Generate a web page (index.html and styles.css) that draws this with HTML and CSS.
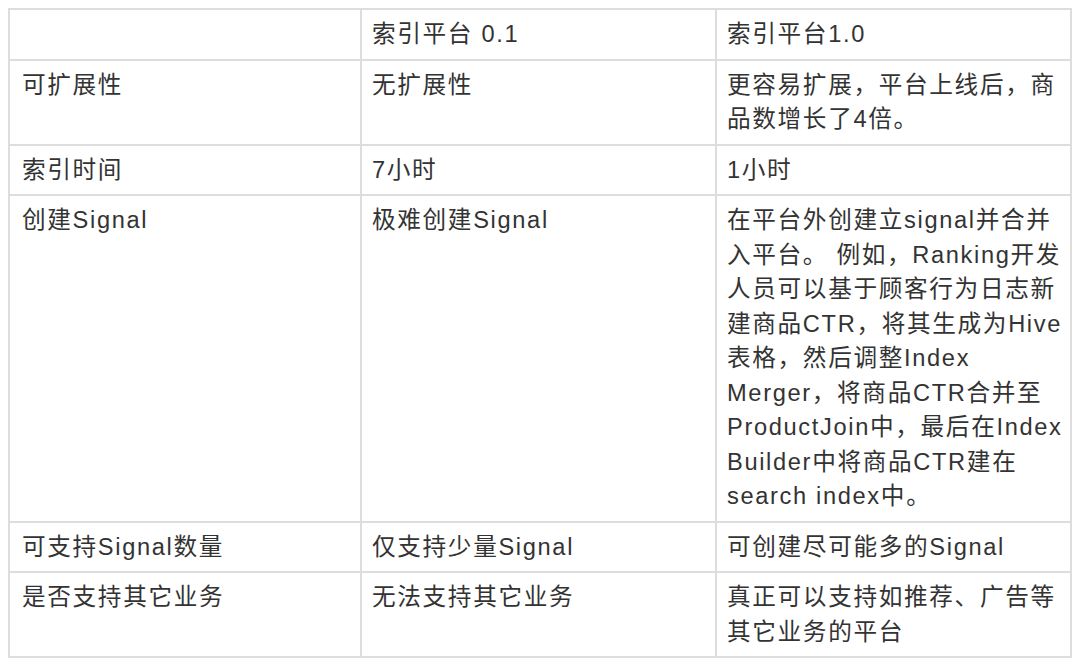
FILE: index.html
```html
<!DOCTYPE html>
<html lang="zh-CN">
<head>
<meta charset="utf-8">
<title>索引平台对比</title>
<link rel="stylesheet" href="styles.css">
</head>
<body>
<table class="compare">
  <colgroup>
    <col class="c1"><col class="c2"><col class="c3">
  </colgroup>
  <tbody>
    <tr>
      <td></td>
      <td>索引平台 0.1</td>
      <td>索引平台1.0</td>
    </tr>
    <tr>
      <td>可扩展性</td>
      <td>无扩展性</td>
      <td>更容易扩展，平台上线后，商品数增长了4倍。</td>
    </tr>
    <tr>
      <td>索引时间</td>
      <td>7小时</td>
      <td>1小时</td>
    </tr>
    <tr>
      <td>创建Signal</td>
      <td>极难创建Signal</td>
      <td>在平台外创建立signal并合并入平台。 例如，Ranking开发人员可以基于顾客行为日志新建商品CTR，将其生成为Hive表格，然后调整Index Merger，将商品CTR合并至ProductJoin中，最后在Index Builder中将商品CTR建在search index中。</td>
    </tr>
    <tr>
      <td>可支持Signal数量</td>
      <td>仅支持少量Signal</td>
      <td>可创建尽可能多的Signal</td>
    </tr>
    <tr>
      <td>是否支持其它业务</td>
      <td>无法支持其它业务</td>
      <td>真正可以支持如推荐、广告等其它业务的平台</td>
    </tr>
  </tbody>
</table>
</body>
</html>
```
FILE: styles.css
```css
html, body {
  background: #ffffff;
}
body {
  margin: 8px;
  font-family: "Liberation Sans", "Noto Sans CJK SC", sans-serif;
  color: #333333;
}
.compare {
  width: 1064px;
  border-collapse: collapse;
  table-layout: fixed;
  border: 2px solid #dddddd;
}
.compare col.c1 { width: 352px; }
.compare col.c2 { width: 355px; }
.compare col.c3 { width: 355px; }
.compare td {
  border: 2px solid #dddddd;
  padding: 7px 6px 7px 10px;
  vertical-align: top;
  font-size: 23.65px;
  line-height: 34.5px;
  letter-spacing: 1.65px;
}
.compare td:first-child {
  padding-left: 12px;
}
```
